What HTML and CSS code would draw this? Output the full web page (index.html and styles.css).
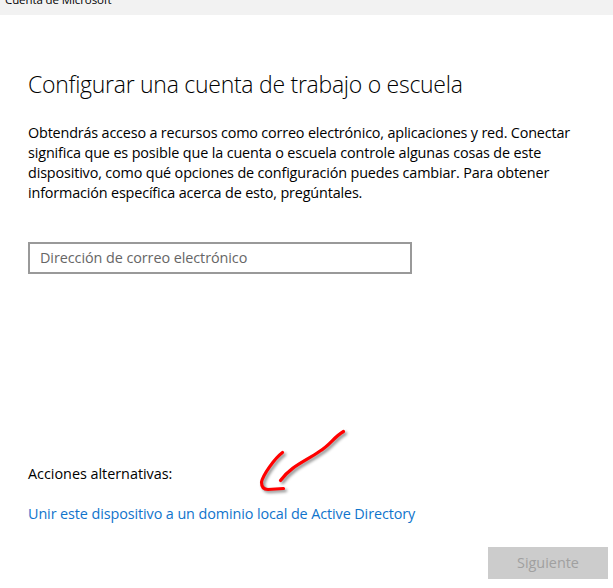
FILE: index.html
```html
<!DOCTYPE html>
<html lang="es">
<head>
<meta charset="utf-8">
<title>Cuenta de Microsoft</title>
<link rel="stylesheet" href="styles.css">
</head>
<body>
<header class="titlebar"><span class="titlebar-text">Cuenta de Microsoft</span></header>
<main class="dialog">
<h1 class="heading">Configurar una cuenta de trabajo o escuela</h1>
<p class="description"><span class="l1">Obtendrás acceso a recursos como correo electrónico, aplicaciones y red. Conectar</span><br><span class="l2">significa que es posible que la cuenta o escuela controle algunas cosas de este</span><br><span class="l3">dispositivo, como qué opciones de configuración puedes cambiar. Para obtener</span><br><span class="l4">información específica acerca de esto, pregúntales.</span></p>
<input class="email" type="email" placeholder="Dirección de correo electrónico">
<section class="alternatives">
<p class="alt-label">Acciones alternativas:</p>
<a class="alt-link">Unir este dispositivo a un dominio local de Active Directory</a>
<svg class="arrow" width="110" height="80" viewBox="250 422 110 80" aria-hidden="true">
<path d="M343.5 431.5C334 437 330 445 320 451C306 461 291 466 280.5 480.5M282.500 452.500C274 459 263 475 261.500 482Q261.500 489.500 268 489.500L283.500 488.500"/>
</svg>
</section>
<footer class="actions"><button class="next" disabled>Siguiente</button></footer>
</main>
</body>
</html>
```
FILE: styles.css
```css
* { box-sizing: border-box; }
body {
  margin: 0;
  height: 588px;
  overflow: hidden;
  background: #fff;
  color: #000;
  font: 14.4px/20px "Open Sans", "Noto Sans", sans-serif;
}
.titlebar {
  height: 15px;
  overflow: hidden;
  background: #f2f2f2;
  font-size: 11.5px;
  padding-left: 5px;
}
.titlebar-text { display: block; margin-top: -10px; letter-spacing: -0.1px; }
.dialog { height: 573px; padding: 53px 5px 9px 28px; display: flex; flex-direction: column; }
.heading { margin: 0; font-size: 23px; line-height: 32px; font-weight: 300; white-space: nowrap; letter-spacing: -0.27px; }
.description { margin: 23px 0 0; white-space: nowrap; }
.l1 { letter-spacing: -0.175px; }
.l2 { letter-spacing: -0.137px; }
.l3 { letter-spacing: -0.155px; }
.l4 { letter-spacing: -0.16px; }
.email {
  width: 384px;
  height: 32px;
  margin-top: 39px;
  padding: 0 10px 2px;
  border: 2px solid #999;
  font: inherit;
  letter-spacing: -0.07px;
}
.email::placeholder { color: #666; opacity: 1; }
.alternatives { position: relative; margin-top: 190px; white-space: nowrap; }
.alt-label { margin: 0 0 20px; letter-spacing: -0.02px; }
.alt-link { display: block; color: #1074cc; letter-spacing: -0.1px; }
.arrow { position: absolute; left: 222px; top: -42px; fill: none; stroke: #f00; stroke-width: 3.2; stroke-linecap: round; stroke-linejoin: round; filter: drop-shadow(2px 2px 1.5px rgba(0, 0, 0, .45)); }
.actions { margin-top: auto; display: flex; justify-content: flex-end; }
.next { width: 120px; height: 32px; padding: 0 0 1px; border: 0; background: #ccc; color: #a0a0a0; font: inherit; }
```
